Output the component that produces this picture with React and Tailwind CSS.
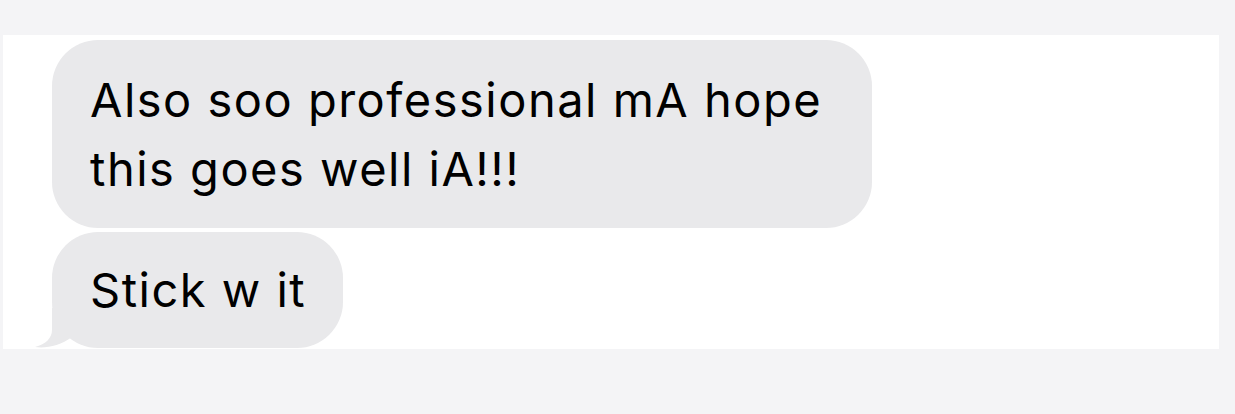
export default function App() {
  return (
    <div
      className="w-[1235px] h-[414px] bg-[#f4f4f6] pt-[35px] pl-[3px] overflow-hidden"
      style={{ fontFamily: "Inter, 'Liberation Sans', sans-serif" }}
    >
      <div className="w-[1216px] h-[314px] bg-white pt-[5px] pl-[49px] flex flex-col gap-[4px]">
        <div className="w-[820px] bg-[#e9e9eb] rounded-[46px] pl-[38px] pr-[20px] py-[25px] text-[47px] leading-[69px] tracking-[1.5px] text-black">
          Also soo professional mA hope
          <br />
          this goes well iA!!!
        </div>
        <div className="relative w-fit bg-[#e9e9eb] rounded-[46px] pl-[38px] pr-[37px] py-[24px] text-[47px] leading-[68px] tracking-[1.5px] text-black">
          <svg
            className="absolute left-[-20px] bottom-0"
            width="50"
            height="40"
            viewBox="0 0 50 40"
          >
            <path
              d="M20 0 L20 22 C20 30 14 36 3 39 C14 40.5 28 38 40 29 L40 0 Z"
              fill="#e9e9eb"
            />
          </svg>
          <span className="relative">Stick w it</span>
        </div>
      </div>
    </div>
  );
}
